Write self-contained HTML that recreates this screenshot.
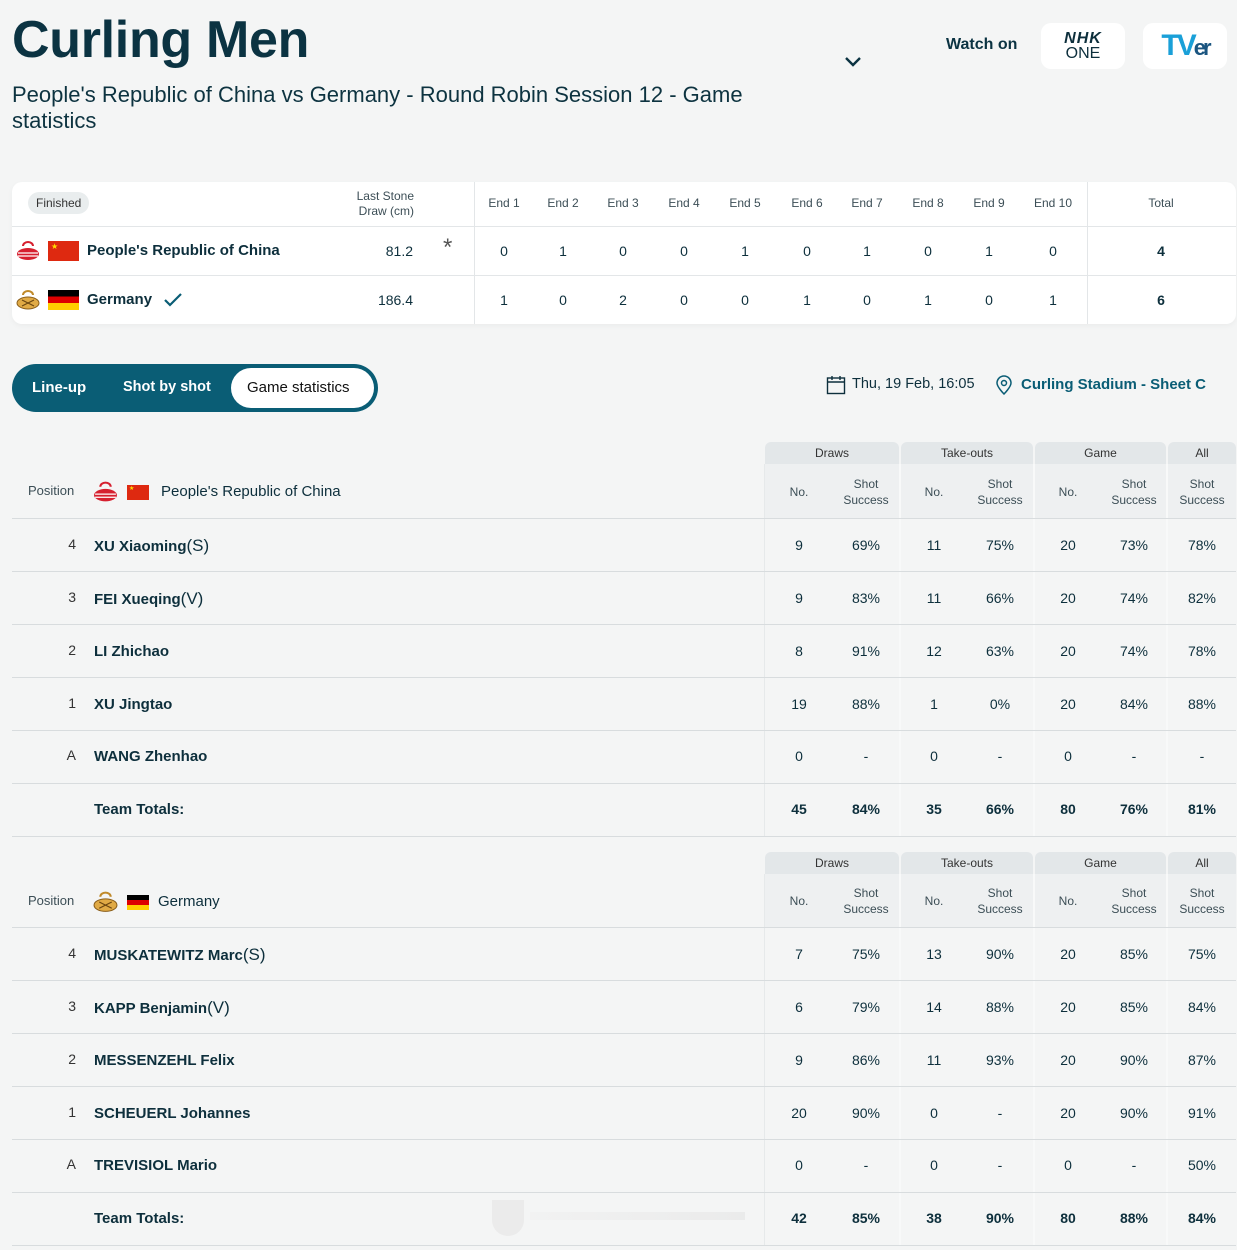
<!DOCTYPE html>
<html><head><meta charset="utf-8">
<style>
*{box-sizing:border-box;margin:0;padding:0}
body{width:1237px;height:1250px;background:#f4f5f5;font-family:"Liberation Sans",sans-serif;color:#0d2f3c;position:relative;overflow:hidden}
.abs{position:absolute}
h1{position:absolute;left:12px;top:10px;font-size:52px;font-weight:bold;color:#0b3342;letter-spacing:-0.3px}
.sub{left:12px;top:82px;font-size:22px;line-height:26px;color:#0d3340;width:770px}
.logo{background:#fff;border-radius:10px;width:84px;height:46px;top:23px;display:flex;align-items:center;justify-content:center;flex-direction:column}
.card{left:12px;top:182px;width:1224px;height:142px;background:#fff;border-radius:10px;box-shadow:0 2px 6px rgba(0,0,0,.04)}
.hl{position:absolute;height:1px;background:#e3e6e8}
.vl{position:absolute;width:1px;background:#e3e6e8}
.c{position:absolute;transform:translateX(-50%);text-align:center;white-space:nowrap}
.sm{font-size:12px;color:#3c4e56}
.num{font-size:14px;color:#0d2f3c}
.tabs{left:12px;top:364px;width:366px;height:48px;background:#0a5d75;border-radius:24px}
.tab{position:absolute;color:#fff;font-weight:bold;font-size:15px;top:15px}
.st{font-size:14px}
.nm{font-size:15px;font-weight:bold;color:#0d2f3c}
.pos{font-size:14px;color:#333}
.g{position:absolute;height:22px;background:#e3e7e9;border-radius:6px 6px 0 0;font-size:12px;color:#333;text-align:center;line-height:22px}
.hb{position:absolute;left:765px;width:471px;height:54px;background:#eef0f1}
.sv{position:absolute;width:2px;background:#f8f9f9}
</style></head><body>
<h1>Curling Men</h1>
<div class="abs sub">People's Republic of China vs Germany - Round Robin Session 12 - Game statistics</div>
<svg class="abs" style="left:844px;top:56px" width="18" height="12" viewBox="0 0 18 12"><path d="M2 2l7 7 7-7" fill="none" stroke="#0b3342" stroke-width="2.4"/></svg>
<div class="abs" style="left:946px;top:36px;font-size:16px;font-weight:bold;color:#0b3342">Watch on</div>
<div class="abs logo" style="left:1041px"><div style="font-style:italic;font-weight:900;font-size:16px;line-height:15px;letter-spacing:1px">NHK</div><div style="font-size:16px;line-height:16px">ONE</div></div>
<div class="abs logo" style="left:1143px"><div style="font-size:30px;font-weight:bold;color:#1aa0d8;letter-spacing:-3px">TV<span style="color:#1a5580;font-size:22px">er</span></div></div>

<div class="abs card">
 <div class="abs" style="left:16px;top:10px;background:#e9edee;border-radius:12px;padding:4px 8px;font-size:12px;color:#333">Finished</div>
 <div class="abs sm" style="left:320px;top:7px;width:82px;text-align:right;line-height:15px">Last Stone<br>Draw (cm)</div>
 <div class="hl" style="left:0;top:44px;width:1224px"></div>
 <div class="hl" style="left:0;top:93px;width:1224px"></div>
 <div class="vl" style="left:462px;top:0;height:142px"></div>
 <div class="vl" style="left:1075px;top:0;height:142px"></div>
 <svg class="abs" style="left:4px;top:59px" width="24" height="20" viewBox="0 0 24 20"><path d="M7 5a5 4 0 0 1 10 0" fill="none" stroke="#d6202f" stroke-width="2"/><ellipse cx="12" cy="13" rx="11" ry="6" fill="#d6202f"/><path d="M2 12h20M2 15h20" stroke="#fff" stroke-width="1.2"/></svg>
 <div class="abs" style="left:36px;top:59px;width:31px;height:20px;background:#de2910"><span style="position:absolute;left:3px;top:1px;color:#ffde00;font-size:8px">★</span></div>
 <div class="abs nm" style="left:75px;top:60px">People's Republic of China</div>
 <div class="abs num" style="left:300px;width:101px;text-align:right;top:61px">81.2</div>
 <div class="abs" style="left:431px;top:52px;font-size:24px;color:#555">*</div>
 <svg class="abs" style="left:4px;top:108px" width="24" height="20" viewBox="0 0 24 20"><path d="M7 5a5 4 0 0 1 10 0" fill="none" stroke="#c08a2a" stroke-width="2"/><ellipse cx="12" cy="13" rx="11" ry="6" fill="#e0aa45" stroke="#8a5e1a"/><path d="M6 10l12 6M6 16l12-6" stroke="#6b4610" stroke-width="1.2"/></svg>
 <div class="abs" style="left:36px;top:108px;width:31px;height:20px;background:linear-gradient(#000 33%,#dd0000 33% 66%,#ffce00 66%)"></div>
 <div class="abs nm" style="left:75px;top:109px">Germany</div>
 <svg class="abs" style="left:151px;top:110px" width="20" height="16" viewBox="0 0 20 16"><path d="M2 8l5 5 11-11" fill="none" stroke="#0a5d75" stroke-width="2.2"/></svg>
 <div class="abs num" style="left:300px;width:101px;text-align:right;top:110px">186.4</div>
 <div class="c sm" style="left:492px;top:14px">End 1</div><div class="c sm" style="left:551px;top:14px">End 2</div><div class="c sm" style="left:611px;top:14px">End 3</div><div class="c sm" style="left:672px;top:14px">End 4</div><div class="c sm" style="left:733px;top:14px">End 5</div><div class="c sm" style="left:795px;top:14px">End 6</div><div class="c sm" style="left:855px;top:14px">End 7</div><div class="c sm" style="left:916px;top:14px">End 8</div><div class="c sm" style="left:977px;top:14px">End 9</div><div class="c sm" style="left:1041px;top:14px">End 10</div><div class="c sm" style="left:1149px;top:14px">Total</div>
 <div class="c num" style="left:492px;top:61px">0</div><div class="c num" style="left:551px;top:61px">1</div><div class="c num" style="left:611px;top:61px">0</div><div class="c num" style="left:672px;top:61px">0</div><div class="c num" style="left:733px;top:61px">1</div><div class="c num" style="left:795px;top:61px">0</div><div class="c num" style="left:855px;top:61px">1</div><div class="c num" style="left:916px;top:61px">0</div><div class="c num" style="left:977px;top:61px">1</div><div class="c num" style="left:1041px;top:61px">0</div><div class="c num" style="left:1149px;top:61px;font-weight:bold">4</div>
 <div class="c num" style="left:492px;top:110px">1</div><div class="c num" style="left:551px;top:110px">0</div><div class="c num" style="left:611px;top:110px">2</div><div class="c num" style="left:672px;top:110px">0</div><div class="c num" style="left:733px;top:110px">0</div><div class="c num" style="left:795px;top:110px">1</div><div class="c num" style="left:855px;top:110px">0</div><div class="c num" style="left:916px;top:110px">1</div><div class="c num" style="left:977px;top:110px">0</div><div class="c num" style="left:1041px;top:110px">1</div><div class="c num" style="left:1149px;top:110px;font-weight:bold">6</div>
</div>

<div class="abs tabs">
 <div class="tab" style="left:20px">Line-up</div>
 <div class="tab" style="left:111px;font-size:14.5px">Shot by shot</div>
 <div class="abs" style="left:219px;top:4px;width:143px;height:40px;background:#fff;border-radius:20px"></div>
 <div class="tab" style="left:235px;color:#111;font-weight:normal">Game statistics</div>
</div>
<svg class="abs" style="left:826px;top:375px" width="20" height="20" viewBox="0 0 20 20"><rect x="1.5" y="3" width="17" height="15.5" fill="none" stroke="#0d2f3c" stroke-width="1.4"/><path d="M1.5 7h17M6 1v4M14 1v4" stroke="#0d2f3c" stroke-width="1.4"/></svg>
<div class="abs" style="left:852px;top:376px;font-size:14.5px">Thu, 19 Feb, 16:05</div>
<svg class="abs" style="left:995px;top:375px" width="18" height="20" viewBox="0 0 18 20"><path d="M9 19s-7-7-7-11a7 7 0 0 1 14 0c0 4-7 11-7 11z" fill="none" stroke="#0a5d75" stroke-width="1.5"/><circle cx="9" cy="8" r="2.5" fill="none" stroke="#0a5d75" stroke-width="1.5"/></svg>
<div class="abs" style="left:1021px;top:376px;font-size:15px;font-weight:bold;color:#0a5d75">Curling Stadium - Sheet C</div>

<!-- Table 1 -->
<div class="g" style="left:765px;top:442px;width:134px">Draws</div>
<div class="g" style="left:901px;top:442px;width:132px">Take-outs</div>
<div class="g" style="left:1035px;top:442px;width:131px">Game</div>
<div class="g" style="left:1168px;top:442px;width:68px">All</div>
<div class="hb" style="top:464px"></div>
<div class="sv" style="left:899px;top:464px;height:372px"></div><div class="sv" style="left:1033px;top:464px;height:372px"></div><div class="sv" style="left:1166px;top:464px;height:372px"></div><div class="sv" style="left:764px;top:464px;height:372px;background:#e6e9ea;width:1px"></div>
<div class="abs sm" style="left:28px;top:483px;font-size:13px">Position</div>
<svg class="abs" style="left:93px;top:481px" width="25" height="22" viewBox="0 0 24 20"><path d="M7 5a5 4 0 0 1 10 0" fill="none" stroke="#d6202f" stroke-width="2"/><ellipse cx="12" cy="13" rx="11" ry="6" fill="#d6202f"/><path d="M2 12h20M2 15h20" stroke="#fff" stroke-width="1.2"/></svg>
<div class="abs" style="left:127px;top:485px;width:22px;height:15px;background:#de2910"><span style="position:absolute;left:2px;top:0;color:#ffde00;font-size:6px">★</span></div>
<div class="abs" style="left:161px;top:483px;font-size:15px">People's Republic of China</div>
<div class="c sm" style="left:799px;top:485px">No.</div><div class="c sm" style="left:866px;top:476px;line-height:16px">Shot<br>Success</div>
<div class="c sm" style="left:934px;top:485px">No.</div><div class="c sm" style="left:1000px;top:476px;line-height:16px">Shot<br>Success</div>
<div class="c sm" style="left:1068px;top:485px">No.</div><div class="c sm" style="left:1134px;top:476px;line-height:16px">Shot<br>Success</div>
<div class="c sm" style="left:1202px;top:476px;line-height:16px">Shot<br>Success</div>
<div class="hl" style="left:12px;top:518px;width:1224px;background:#d8dcde"></div>
<div class="hl" style="left:12px;top:571px;width:1224px;background:#d8dcde"></div>
<div class="hl" style="left:12px;top:624px;width:1224px;background:#d8dcde"></div>
<div class="hl" style="left:12px;top:677px;width:1224px;background:#d8dcde"></div>
<div class="hl" style="left:12px;top:730px;width:1224px;background:#d8dcde"></div>
<div class="hl" style="left:12px;top:783px;width:1224px;background:#d8dcde"></div>
<div class="hl" style="left:12px;top:836px;width:1224px;background:#d8dcde"></div>

<div class="abs pos" style="left:60px;top:536px;width:16px;text-align:right">4</div><div class="abs nm" style="left:94px;top:536px">XU Xiaoming<span style="font-weight:normal;font-size:17px">(S)</span></div>
<div class="abs pos" style="left:60px;top:589px;width:16px;text-align:right">3</div><div class="abs nm" style="left:94px;top:589px">FEI Xueqing<span style="font-weight:normal;font-size:17px">(V)</span></div>
<div class="abs pos" style="left:60px;top:642px;width:16px;text-align:right">2</div><div class="abs nm" style="left:94px;top:643px">LI Zhichao</div>
<div class="abs pos" style="left:60px;top:695px;width:16px;text-align:right">1</div><div class="abs nm" style="left:94px;top:696px">XU Jingtao</div>
<div class="abs pos" style="left:60px;top:747px;width:16px;text-align:right">A</div><div class="abs nm" style="left:94px;top:748px">WANG Zhenhao</div>
<div class="abs nm" style="left:94px;top:801px">Team Totals:</div>

<div class="c st" style="left:799px;top:537px">9</div><div class="c st" style="left:866px;top:537px">69%</div><div class="c st" style="left:934px;top:537px">11</div><div class="c st" style="left:1000px;top:537px">75%</div><div class="c st" style="left:1068px;top:537px">20</div><div class="c st" style="left:1134px;top:537px">73%</div><div class="c st" style="left:1202px;top:537px">78%</div>
<div class="c st" style="left:799px;top:590px">9</div><div class="c st" style="left:866px;top:590px">83%</div><div class="c st" style="left:934px;top:590px">11</div><div class="c st" style="left:1000px;top:590px">66%</div><div class="c st" style="left:1068px;top:590px">20</div><div class="c st" style="left:1134px;top:590px">74%</div><div class="c st" style="left:1202px;top:590px">82%</div>
<div class="c st" style="left:799px;top:643px">8</div><div class="c st" style="left:866px;top:643px">91%</div><div class="c st" style="left:934px;top:643px">12</div><div class="c st" style="left:1000px;top:643px">63%</div><div class="c st" style="left:1068px;top:643px">20</div><div class="c st" style="left:1134px;top:643px">74%</div><div class="c st" style="left:1202px;top:643px">78%</div>
<div class="c st" style="left:799px;top:696px">19</div><div class="c st" style="left:866px;top:696px">88%</div><div class="c st" style="left:934px;top:696px">1</div><div class="c st" style="left:1000px;top:696px">0%</div><div class="c st" style="left:1068px;top:696px">20</div><div class="c st" style="left:1134px;top:696px">84%</div><div class="c st" style="left:1202px;top:696px">88%</div>
<div class="c st" style="left:799px;top:748px">0</div><div class="c st" style="left:866px;top:748px">-</div><div class="c st" style="left:934px;top:748px">0</div><div class="c st" style="left:1000px;top:748px">-</div><div class="c st" style="left:1068px;top:748px">0</div><div class="c st" style="left:1134px;top:748px">-</div><div class="c st" style="left:1202px;top:748px">-</div>
<div class="c st" style="left:799px;top:801px;font-weight:bold">45</div><div class="c st" style="left:866px;top:801px;font-weight:bold">84%</div><div class="c st" style="left:934px;top:801px;font-weight:bold">35</div><div class="c st" style="left:1000px;top:801px;font-weight:bold">66%</div><div class="c st" style="left:1068px;top:801px;font-weight:bold">80</div><div class="c st" style="left:1134px;top:801px;font-weight:bold">76%</div><div class="c st" style="left:1202px;top:801px;font-weight:bold">81%</div>

<!-- Table 2 -->
<div class="g" style="left:765px;top:852px;width:134px">Draws</div>
<div class="g" style="left:901px;top:852px;width:132px">Take-outs</div>
<div class="g" style="left:1035px;top:852px;width:131px">Game</div>
<div class="g" style="left:1168px;top:852px;width:68px">All</div>
<div class="hb" style="top:874px"></div>
<div class="sv" style="left:899px;top:874px;height:372px"></div><div class="sv" style="left:1033px;top:874px;height:372px"></div><div class="sv" style="left:1166px;top:874px;height:372px"></div><div class="sv" style="left:764px;top:874px;height:372px;background:#e6e9ea;width:1px"></div>
<div class="abs sm" style="left:28px;top:893px;font-size:13px">Position</div>
<svg class="abs" style="left:93px;top:891px" width="25" height="22" viewBox="0 0 24 20"><path d="M7 5a5 4 0 0 1 10 0" fill="none" stroke="#c08a2a" stroke-width="2"/><ellipse cx="12" cy="13" rx="11" ry="6" fill="#e0aa45" stroke="#8a5e1a"/><path d="M6 10l12 6M6 16l12-6" stroke="#6b4610" stroke-width="1.2"/></svg>
<div class="abs" style="left:127px;top:895px;width:22px;height:15px;background:linear-gradient(#000 33%,#dd0000 33% 66%,#ffce00 66%)"></div>
<div class="abs" style="left:158px;top:893px;font-size:15px">Germany</div>
<div class="c sm" style="left:799px;top:894px">No.</div><div class="c sm" style="left:866px;top:885px;line-height:16px">Shot<br>Success</div>
<div class="c sm" style="left:934px;top:894px">No.</div><div class="c sm" style="left:1000px;top:885px;line-height:16px">Shot<br>Success</div>
<div class="c sm" style="left:1068px;top:894px">No.</div><div class="c sm" style="left:1134px;top:885px;line-height:16px">Shot<br>Success</div>
<div class="c sm" style="left:1202px;top:885px;line-height:16px">Shot<br>Success</div>
<div class="hl" style="left:12px;top:927px;width:1224px;background:#d8dcde"></div>
<div class="hl" style="left:12px;top:980px;width:1224px;background:#d8dcde"></div>
<div class="hl" style="left:12px;top:1033px;width:1224px;background:#d8dcde"></div>
<div class="hl" style="left:12px;top:1086px;width:1224px;background:#d8dcde"></div>
<div class="hl" style="left:12px;top:1139px;width:1224px;background:#d8dcde"></div>
<div class="hl" style="left:12px;top:1192px;width:1224px;background:#d8dcde"></div>
<div class="hl" style="left:12px;top:1245px;width:1224px;background:#d8dcde"></div>

<div class="abs pos" style="left:60px;top:945px;width:16px;text-align:right">4</div><div class="abs nm" style="left:94px;top:945px">MUSKATEWITZ Marc<span style="font-weight:normal;font-size:17px">(S)</span></div>
<div class="abs pos" style="left:60px;top:998px;width:16px;text-align:right">3</div><div class="abs nm" style="left:94px;top:998px">KAPP Benjamin<span style="font-weight:normal;font-size:17px">(V)</span></div>
<div class="abs pos" style="left:60px;top:1051px;width:16px;text-align:right">2</div><div class="abs nm" style="left:94px;top:1052px">MESSENZEHL Felix</div>
<div class="abs pos" style="left:60px;top:1104px;width:16px;text-align:right">1</div><div class="abs nm" style="left:94px;top:1105px">SCHEUERL Johannes</div>
<div class="abs pos" style="left:60px;top:1156px;width:16px;text-align:right">A</div><div class="abs nm" style="left:94px;top:1157px">TREVISIOL Mario</div>
<div class="abs nm" style="left:94px;top:1210px">Team Totals:</div>

<div class="c st" style="left:799px;top:946px">7</div><div class="c st" style="left:866px;top:946px">75%</div><div class="c st" style="left:934px;top:946px">13</div><div class="c st" style="left:1000px;top:946px">90%</div><div class="c st" style="left:1068px;top:946px">20</div><div class="c st" style="left:1134px;top:946px">85%</div><div class="c st" style="left:1202px;top:946px">75%</div>
<div class="c st" style="left:799px;top:999px">6</div><div class="c st" style="left:866px;top:999px">79%</div><div class="c st" style="left:934px;top:999px">14</div><div class="c st" style="left:1000px;top:999px">88%</div><div class="c st" style="left:1068px;top:999px">20</div><div class="c st" style="left:1134px;top:999px">85%</div><div class="c st" style="left:1202px;top:999px">84%</div>
<div class="c st" style="left:799px;top:1052px">9</div><div class="c st" style="left:866px;top:1052px">86%</div><div class="c st" style="left:934px;top:1052px">11</div><div class="c st" style="left:1000px;top:1052px">93%</div><div class="c st" style="left:1068px;top:1052px">20</div><div class="c st" style="left:1134px;top:1052px">90%</div><div class="c st" style="left:1202px;top:1052px">87%</div>
<div class="c st" style="left:799px;top:1105px">20</div><div class="c st" style="left:866px;top:1105px">90%</div><div class="c st" style="left:934px;top:1105px">0</div><div class="c st" style="left:1000px;top:1105px">-</div><div class="c st" style="left:1068px;top:1105px">20</div><div class="c st" style="left:1134px;top:1105px">90%</div><div class="c st" style="left:1202px;top:1105px">91%</div>
<div class="c st" style="left:799px;top:1157px">0</div><div class="c st" style="left:866px;top:1157px">-</div><div class="c st" style="left:934px;top:1157px">0</div><div class="c st" style="left:1000px;top:1157px">-</div><div class="c st" style="left:1068px;top:1157px">0</div><div class="c st" style="left:1134px;top:1157px">-</div><div class="c st" style="left:1202px;top:1157px">50%</div>
<div class="c st" style="left:799px;top:1210px;font-weight:bold">42</div><div class="c st" style="left:866px;top:1210px;font-weight:bold">85%</div><div class="c st" style="left:934px;top:1210px;font-weight:bold">38</div><div class="c st" style="left:1000px;top:1210px;font-weight:bold">90%</div><div class="c st" style="left:1068px;top:1210px;font-weight:bold">80</div><div class="c st" style="left:1134px;top:1210px;font-weight:bold">88%</div><div class="c st" style="left:1202px;top:1210px;font-weight:bold">84%</div>
<div class="abs" style="left:492px;top:1200px;width:32px;height:36px;background:#e4e4e4;border-radius:0 0 16px 16px;opacity:.6"></div>
<div class="abs" style="left:530px;top:1212px;width:215px;height:8px;background:linear-gradient(90deg,#f0f0f0,#e4e4e4);opacity:.6"></div>
</body></html>
